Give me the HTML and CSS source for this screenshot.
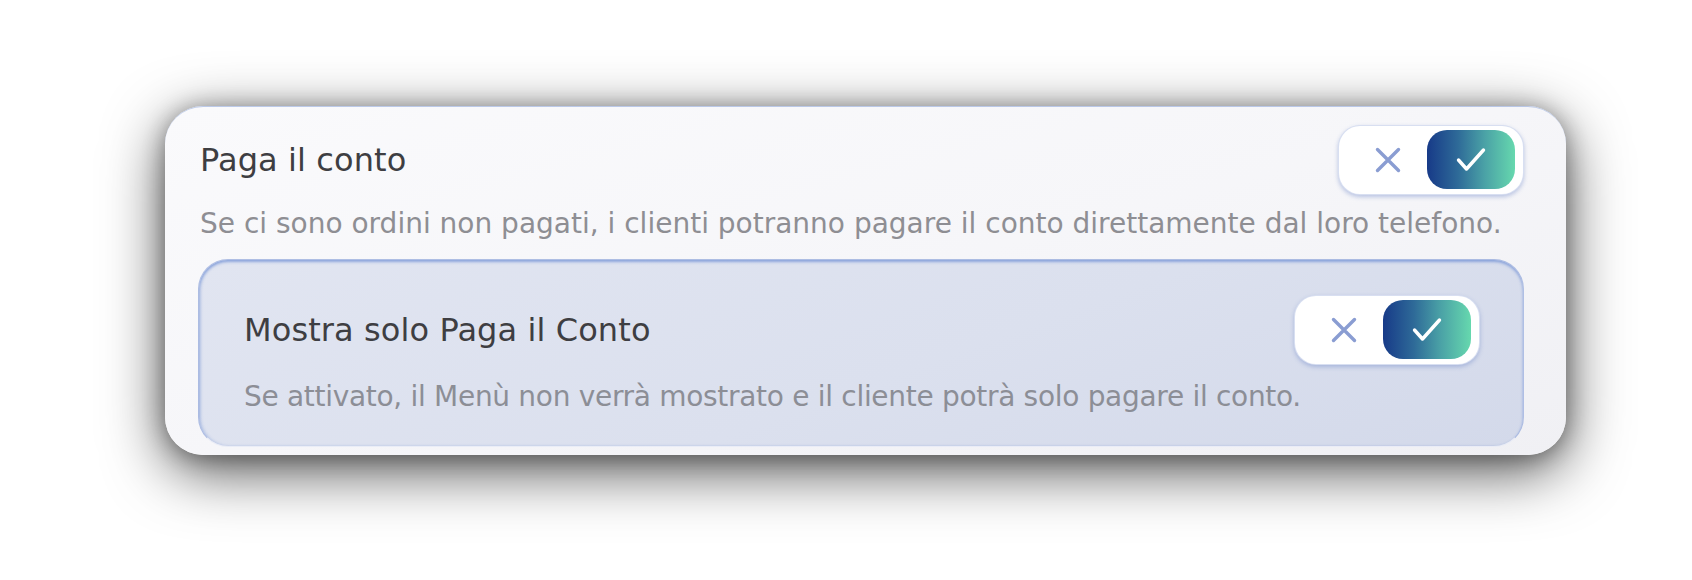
FILE: index.html
```html
<!DOCTYPE html>
<html lang="it">
<head>
<meta charset="utf-8">
<title>Paga il conto</title>
<link rel="stylesheet" href="styles.css">
</head>
<body>
<div class="page">
  <section class="card">
    <div class="row">
      <h2 class="title">Paga il conto</h2>
      <div class="toggle">
        <span class="off"><svg width="26" height="26" viewBox="0 0 26 26"><path d="M2.5 2.5 L23.5 23.5 M23.5 2.5 L2.5 23.5" stroke="#8a9dd2" stroke-width="3.4" stroke-linecap="round" fill="none"/></svg></span>
        <span class="knob"><svg width="30" height="25" viewBox="0 0 30 25"><path d="M2.5 13 L10.5 22 L27.5 3" stroke="#fff" stroke-width="3.4" stroke-linecap="round" stroke-linejoin="round" fill="none"/></svg></span>
      </div>
    </div>
    <p class="desc">Se ci sono ordini non pagati, i clienti potranno pagare il conto direttamente dal loro telefono.</p>
    <div class="sub">
      <div class="row">
        <h3 class="title">Mostra solo Paga il Conto</h3>
        <div class="toggle">
          <span class="off"><svg width="26" height="26" viewBox="0 0 26 26"><path d="M2.5 2.5 L23.5 23.5 M23.5 2.5 L2.5 23.5" stroke="#8a9dd2" stroke-width="3.4" stroke-linecap="round" fill="none"/></svg></span>
          <span class="knob"><svg width="30" height="25" viewBox="0 0 30 25"><path d="M2.5 13 L10.5 22 L27.5 3" stroke="#fff" stroke-width="3.4" stroke-linecap="round" stroke-linejoin="round" fill="none"/></svg></span>
        </div>
      </div>
      <p class="desc sub-desc">Se attivato, il Menù non verrà mostrato e il cliente potrà solo pagare il conto.</p>
    </div>
  </section>
</div>
</body>
</html>
```

FILE: styles.css
```css
html, body {
  margin: 0;
  padding: 0;
  background: #ffffff;
}

.page {
  box-sizing: border-box;
  min-height: 580px;
  padding: 106px 0 0 165px;
  font-family: "DejaVu Sans", "Noto Sans", sans-serif;
}

.card {
  box-sizing: border-box;
  width: 1401px;
  height: 349px;
  padding: 18px 42px 9px 33px;
  border-radius: 38px;
  border-top: 1px solid rgba(140, 165, 220, 0.55);
  background: linear-gradient(165deg, #fafafc 0%, #f6f6f9 50%, #f0f0f4 100%);
  box-shadow: 0 16px 60px rgba(0, 0, 0, 0.68), 0 2px 22px rgba(0, 0, 0, 0.32);
}

.row {
  display: flex;
  align-items: center;
  justify-content: space-between;
  height: 70px;
}

.title {
  margin: 0 0 0 2px;
  font-size: 32px;
  font-weight: normal;
  color: #3e3e42;
  letter-spacing: 0.1px;
}

.desc {
  margin: 11px 0 0 2px;
  font-size: 28px;
  line-height: 36px;
  color: #8e8e93;
  letter-spacing: 0;
}

.toggle {
  box-sizing: border-box;
  display: flex;
  align-items: center;
  width: 186px;
  height: 70px;
  padding: 5px 8px 6px 10px;
  border-radius: 22px;
  background: #ffffff;
  border: 1px solid rgba(200, 210, 235, 0.7);
  box-shadow: 0 2px 4px rgba(110, 135, 200, 0.45);
}

.off {
  flex: 1;
  display: flex;
  align-items: center;
  justify-content: center;
}

.knob {
  display: flex;
  align-items: center;
  justify-content: center;
  width: 88px;
  height: 59px;
  border-radius: 20px;
  background: linear-gradient(90deg, #173a88 0%, #2e6a98 35%, #4aa1a6 65%, #66d8ae 100%);
}

.sub {
  box-sizing: border-box;
  height: 188px;
  margin-top: 17px;
  padding: 35px 43px 0 43px;
  border-radius: 30px;
  border: 1px solid rgba(150, 172, 222, 0.65);
  border-bottom-color: rgba(235, 238, 248, 0.9);
  background: linear-gradient(160deg, #e1e5f1 0%, #dbe0ee 55%, #d3d9ea 100%);
  box-shadow: inset 0 2px 3px rgba(80, 120, 205, 0.55), inset 2px 0 3px rgba(80, 120, 205, 0.2);
}

.sub-desc {
  margin-top: 14px;
  color: #8c8e96;
  letter-spacing: -0.3px;
}
```
